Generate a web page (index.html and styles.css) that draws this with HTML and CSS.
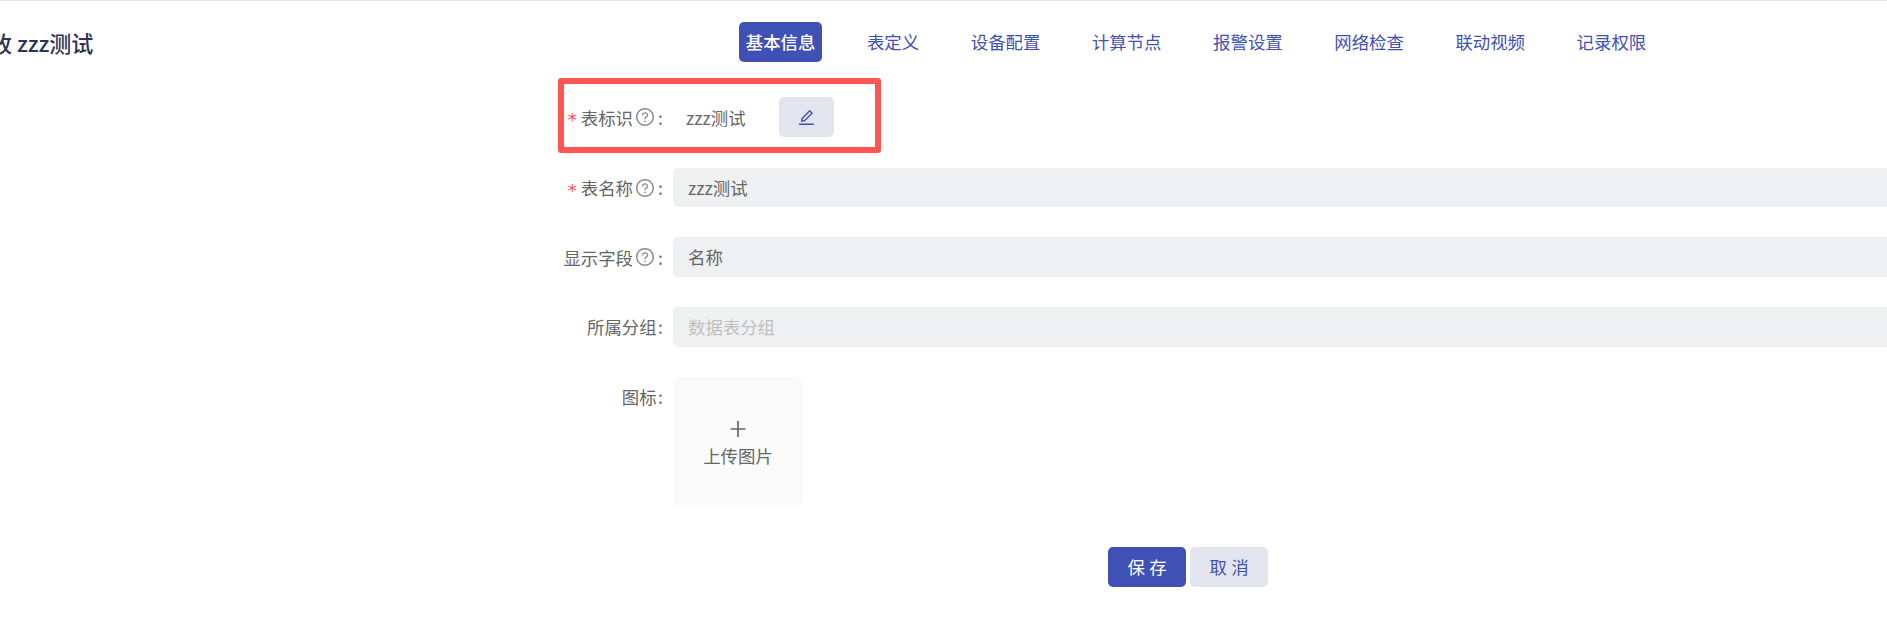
FILE: index.html
```html
<!DOCTYPE html>
<html lang="zh-CN">
<head>
<meta charset="utf-8">
<title>修改 zzz测试</title>
<link rel="stylesheet" href="styles.css">
</head>
<body>
<div class="page">
  <header class="header">
    <h1 class="title">修改 zzz测试</h1>
    <nav class="tabs">
      <a class="tab active">基本信息</a>
      <a class="tab">表定义</a>
      <a class="tab">设备配置</a>
      <a class="tab">计算节点</a>
      <a class="tab">报警设置</a>
      <a class="tab">网络检查</a>
      <a class="tab">联动视频</a>
      <a class="tab">记录权限</a>
    </nav>
  </header>
  <form class="form">
    <div class="row row-id">
      <div class="mark"></div>
      <label class="label"><span class="req">*</span>表标识<svg class="help" viewBox="64 64 896 896"><path d="M512 64C264.6 64 64 264.6 64 512s200.6 448 448 448 448-200.6 448-448S759.4 64 512 64zm0 820c-205.4 0-372-166.6-372-372s166.6-372 372-372 372 166.6 372 372-166.6 372-372 372z"/><path d="M623.6 316.7C593.6 290.4 554 276 512 276s-81.6 14.5-111.6 40.7C369.2 344 352 380.7 352 420v7.6c0 4.4 3.6 8 8 8h48c4.4 0 8-3.6 8-8V420c0-44.1 43.1-80 96-80s96 35.9 96 80c0 31.1-22 59.6-56.1 72.7-21.2 8.1-39.2 22.3-52.1 40.9-13.1 19-19.9 41.8-19.9 64.9V620c0 4.4 3.6 8 8 8h48c4.4 0 8-3.6 8-8v-22.7a48.3 48.3 0 0 1 30.9-44.8c59-22.7 97.1-74.7 97.1-132.5.1-39.3-17.1-76-48.3-103.3zM472 732a40 40 0 1 0 80 0 40 40 0 1 0-80 0z"/></svg><span class="colon">:</span></label>
      <div class="static">zzz测试</div>
      <button type="button" class="edit"><svg viewBox="64 64 896 896"><path d="M257.7 752c2 0 4-.2 6-.5L431.9 722c2-.4 3.9-1.3 5.3-2.8l423.9-423.9a9.96 9.96 0 0 0 0-14.1L694.9 114.9c-1.9-1.9-4.4-2.9-7.1-2.9s-5.2 1-7.1 2.9L256.8 538.8c-1.5 1.5-2.4 3.3-2.8 5.3l-29.5 168.2a33.5 33.5 0 0 0 9.4 29.8c6.6 6.4 14.9 9.9 23.8 9.9zm67.4-174.4L687.8 215l73.3 73.3-362.7 362.6-88.9 15.7 15.6-89zM880 836H144c-17.7 0-32 14.3-32 32v36c0 4.4 3.6 8 8 8h784c4.4 0 8-3.6 8-8v-36c0-17.7-14.3-32-32-32z"/></svg></button>
    </div>
    <div class="row">
      <label class="label"><span class="req">*</span>表名称<svg class="help" viewBox="64 64 896 896"><path d="M512 64C264.6 64 64 264.6 64 512s200.6 448 448 448 448-200.6 448-448S759.4 64 512 64zm0 820c-205.4 0-372-166.6-372-372s166.6-372 372-372 372 166.6 372 372-166.6 372-372 372z"/><path d="M623.6 316.7C593.6 290.4 554 276 512 276s-81.6 14.5-111.6 40.7C369.2 344 352 380.7 352 420v7.6c0 4.4 3.6 8 8 8h48c4.4 0 8-3.6 8-8V420c0-44.1 43.1-80 96-80s96 35.9 96 80c0 31.1-22 59.6-56.1 72.7-21.2 8.1-39.2 22.3-52.1 40.9-13.1 19-19.9 41.8-19.9 64.9V620c0 4.4 3.6 8 8 8h48c4.4 0 8-3.6 8-8v-22.7a48.3 48.3 0 0 1 30.9-44.8c59-22.7 97.1-74.7 97.1-132.5.1-39.3-17.1-76-48.3-103.3zM472 732a40 40 0 1 0 80 0 40 40 0 1 0-80 0z"/></svg><span class="colon">:</span></label>
      <div class="input">zzz测试</div>
    </div>
    <div class="row">
      <label class="label">显示字段<svg class="help" viewBox="64 64 896 896"><path d="M512 64C264.6 64 64 264.6 64 512s200.6 448 448 448 448-200.6 448-448S759.4 64 512 64zm0 820c-205.4 0-372-166.6-372-372s166.6-372 372-372 372 166.6 372 372-166.6 372-372 372z"/><path d="M623.6 316.7C593.6 290.4 554 276 512 276s-81.6 14.5-111.6 40.7C369.2 344 352 380.7 352 420v7.6c0 4.4 3.6 8 8 8h48c4.4 0 8-3.6 8-8V420c0-44.1 43.1-80 96-80s96 35.9 96 80c0 31.1-22 59.6-56.1 72.7-21.2 8.1-39.2 22.3-52.1 40.9-13.1 19-19.9 41.8-19.9 64.9V620c0 4.4 3.6 8 8 8h48c4.4 0 8-3.6 8-8v-22.7a48.3 48.3 0 0 1 30.9-44.8c59-22.7 97.1-74.7 97.1-132.5.1-39.3-17.1-76-48.3-103.3zM472 732a40 40 0 1 0 80 0 40 40 0 1 0-80 0z"/></svg><span class="colon">:</span></label>
      <div class="input">名称</div>
    </div>
    <div class="row">
      <label class="label">所属分组<span class="colon tight">:</span></label>
      <div class="input placeholder">数据表分组</div>
    </div>
    <div class="row row-upload">
      <label class="label">图标<span class="colon tight">:</span></label>
      <div class="upload">
        <svg class="plus" viewBox="64 64 896 896"><path d="M482 152h60q8 0 8 8v704q0 8-8 8h-60q-8 0-8-8V160q0-8 8-8Z"/><path d="M192 474h640q8 0 8 8v60q0 8-8 8H192q-8 0-8-8v-60q0-8 8-8Z"/></svg>
        <span>上传图片</span>
      </div>
    </div>
    <div class="actions">
      <button type="button" class="btn primary">保存</button>
      <button type="button" class="btn secondary">取消</button>
    </div>
  </form>
</div>
</body>
</html>
```
FILE: styles.css
```css
* { box-sizing: border-box; }
html, body { margin: 0; padding: 0; height: 100%; overflow: hidden; background: #fff; }
body {
  font-family: "Noto Sans CJK SC", "Noto Sans", sans-serif;
  font-size: 17.4px;
  color: #666;
}
.page { width: 1887px; height: 642px; border-top: 1px solid #e3e3e3; overflow: hidden; }
.header { display: flex; align-items: center; height: 40px; margin-top: 21px; }
.title {
  flex: 0 0 771px;
  margin: 0 0 0 -32px;
  font-size: 22px;
  font-weight: 500;
  color: #2f3358;
  line-height: 40px;
  white-space: nowrap;
}
.tabs { display: flex; gap: 38px; }
.tab { padding: 0 6.8px; height: 40px; line-height: 40px; border-radius: 5px; color: #3f51b5; white-space: nowrap; }
.tab.active { background: #3f51b5; color: #fff; font-weight: 500; }
.form { margin: 35.2px 0 0 560px; width: 1327px; }
.row { position: relative; display: flex; height: 39.6px; margin-bottom: 30px; width: 1400px; }
.row-id { margin-bottom: 31px; }
.row-id .label { padding-top: 1px; }
.label { flex: 0 0 102px; display: flex; align-items: center; justify-content: flex-end; height: 39.6px; color: #666; white-space: nowrap; }
.req { color: #ff4d4f; font-family: "DejaVu Sans", sans-serif; font-size: 18px; line-height: 1; padding-top: 6px; margin-right: 4px; }
.help { width: 18px; height: 18px; margin-left: 3px; fill: #8c8c8c; }
.colon { margin-left: 4px; width: 4px; }
.colon.tight { margin-left: 1.4px; }
.input {
  margin-left: 11px;
  flex: 1;
  height: 39.6px;
  line-height: 39.6px;
  padding: 0 15px;
  background: #eff0f2;
  border-radius: 5px;
  color: #666;
}
.input.placeholder { color: #bfbfbf; }
.static { margin-left: 24px; width: 93px; padding-top: 1px; line-height: 39.6px; color: #666; }
.edit {
  width: 55px;
  height: 39.6px;
  border: 0;
  border-radius: 5px;
  background: #e2e5ed;
  padding: 0;
  display: flex;
  align-items: center;
  justify-content: center;
}
.edit svg { width: 16.8px; height: 16.8px; fill: #3f51b5; }
.mark {
  position: absolute;
  left: -2px;
  top: -19px;
  width: 323px;
  height: 75px;
  border: 6px solid #ff5555;
  border-radius: 3px;
}
.row-upload { height: 130px; margin-bottom: 40px; }
.upload {
  margin-left: 11px;
  width: 130px;
  height: 130px;
  padding-top: 3px;
  background: #fafafa;
  border-radius: 8px;
  display: flex;
  flex-direction: column;
  align-items: center;
  justify-content: center;
  gap: 4px;
  color: #666;
}
.plus { width: 20px; height: 20px; fill: #666; }
.actions { display: flex; gap: 4px; padding-left: 548px; }
.btn {
  width: 78px;
  height: 40px;
  border: 0;
  border-radius: 5px;
  font: inherit;
  letter-spacing: 0.25em;
  text-indent: 0.25em;
  padding: 0;
}
.btn.primary { background: #3f51b5; color: #fff; }
.btn.secondary { background: #e2e5ed; color: #3f51b5; }
```
